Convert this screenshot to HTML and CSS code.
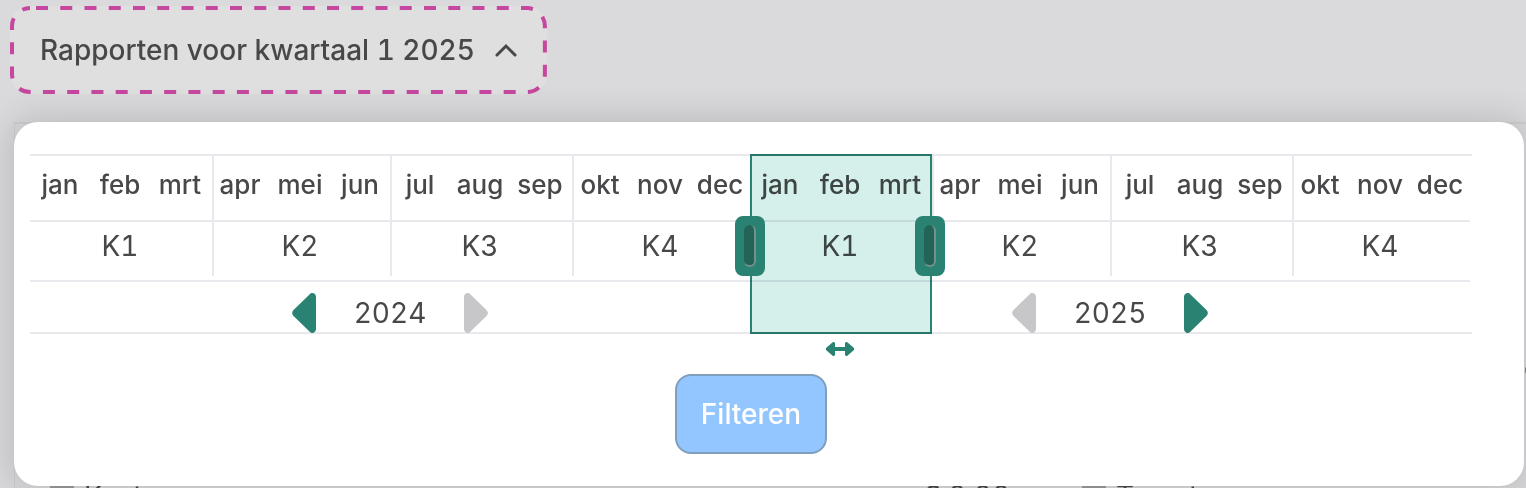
FILE: index.html
```html
<!DOCTYPE html>
<html lang="nl">
  <head>
    <meta charset="UTF-8">
    <meta name="viewport" content="width=device-width, initial-scale=1.0">
    <title>Rapporten</title>
    <link rel="stylesheet" href="styles.css">
  </head>

  <body>
    <button type="button" class="period-toggle" aria-expanded="true">
      <svg class="outline" aria-hidden="true"><rect x="2" y="2" rx="18"/></svg>
      <span>Rapporten voor kwartaal 1 2025</span>
      <svg class="chevron" viewBox="0 0 22 14" aria-hidden="true"><path d="M2 12 L11 3 L20 12"/></svg>
    </button>

    <!-- report under the popup -->
    <div class="report">
      <div class="report-side">e</div>
      <div class="report-row">
        <span class="entry"><i class="mark"></i>Kosten</span>
        <span class="amount">€ 0,00</span>
        <span class="entry"><i class="mark"></i>Te ontvangen</span>
      </div>
    </div>

    <div class="popup">
      <div class="timeline">
        <div class="track">
          <table class="periods">
            <tr class="months">
              <td>jan</td><td>feb</td><td>mrt</td>
              <td class="split">apr</td><td>mei</td><td>jun</td>
              <td class="start">jul</td><td>aug</td><td>sep</td>
              <td class="split">okt</td><td>nov</td><td>dec</td>
              <td>jan</td><td>feb</td><td>mrt</td>
              <td class="split">apr</td><td>mei</td><td>jun</td>
              <td class="start">jul</td><td>aug</td><td>sep</td>
              <td class="split">okt</td><td>nov</td><td>dec</td>
            </tr>
            <tr class="quarters">
              <td colspan="3">K1</td>
              <td colspan="3" class="split">K2</td>
              <td colspan="3" class="start">K3</td>
              <td colspan="3" class="split">K4</td>
              <td colspan="3">K1</td>
              <td colspan="3" class="split">K2</td>
              <td colspan="3" class="start">K3</td>
              <td colspan="3" class="split">K4</td>
            </tr>
            <tr class="years">
              <td colspan="12">
                <div class="year-nav">
                  <button type="button" class="step" aria-label="Vorig startjaar">
                    <svg viewBox="0 0 24 40"><path d="M24 4 V36 C24 39.500 20 41.500 17.500 38.500 L1.500 23 Q-1.200 20 1.500 17 L17.500 1.500 C20 -1.500 24 .5 24 4 Z"/></svg>
                  </button>
                  <span>2024</span>
                  <button type="button" class="step" aria-label="Volgend startjaar" disabled>
                    <svg viewBox="0 0 24 40"><path d="M0 4 V36 C0 39.500 4 41.500 6.500 38.500 L22.500 23 Q25.200 20 22.500 17 L6.500 1.500 C4 -1.500 0 .5 0 4 Z"/></svg>
                  </button>
                </div>
              </td>
              <td colspan="12">
                <div class="year-nav">
                  <button type="button" class="step" aria-label="Vorig eindjaar" disabled>
                    <svg viewBox="0 0 24 40"><path d="M24 4 V36 C24 39.500 20 41.500 17.500 38.500 L1.500 23 Q-1.200 20 1.500 17 L17.500 1.500 C20 -1.500 24 .5 24 4 Z"/></svg>
                  </button>
                  <span>2025</span>
                  <button type="button" class="step" aria-label="Volgend eindjaar">
                    <svg viewBox="0 0 24 40"><path d="M0 4 V36 C0 39.500 4 41.500 6.500 38.500 L22.500 23 Q25.200 20 22.500 17 L6.500 1.500 C4 -1.500 0 .5 0 4 Z"/></svg>
                  </button>
                </div>
              </td>
            </tr>
          </table>

          <!-- selected range, in percent of the two years shown -->
          <div class="selection" style="left: 50%; width: calc(12.5% + 2px)"></div>
          <button type="button" class="handle" style="left: 50%" aria-label="Begin van periode"></button>
          <button type="button" class="handle" style="left: 62.5%" aria-label="Einde van periode"></button>
          <button type="button" class="move" style="left: 56.25%" aria-label="Periode verschuiven">
            <svg viewBox="0 0 28 14"><path d="M8 0 L9 1 V5 H19 V1 L20 0 L21 0 L28 6 V8 L21 14 H20 L19 13 V9 H9 V13 L8 14 H7 L0 8 V6 L7 0 Z"/></svg>
          </button>
        </div>
      </div>

      <button type="submit" class="filter">Filteren</button>
    </div>
  </body>
</html>
```
FILE: styles.css
```css
body {
  margin: 0;
  height: 100vh;
  overflow: hidden;
  position: relative;
  background: #dadadc;
  color: #48484a;
  font-family: Inter, "Liberation Sans", sans-serif;
  font-size: 28px;
  font-variant-numeric: tabular-nums;
}

button {
  border: 0;
  padding: 0;
  background: none;
  color: inherit;
  font: inherit;
  font-variant-numeric: inherit;
  cursor: pointer;
}

.period-toggle {
  position: relative;
  display: flex;
  align-items: center;
  gap: 20px;
  height: 88px;
  margin: 6px 10px 0;
  padding: 0 30px;
  border-radius: 20px;
  background: #dfdfdf;
  font-weight: 500;
}
.outline {
  position: absolute;
  inset: 0;
  width: 100%;
  height: 100%;
}
.outline rect {
  width: calc(100% - 4px);
  height: calc(100% - 4px);
  fill: none;
  stroke: #c6479f;
  stroke-width: 4px;
  stroke-dasharray: 12 12.250;
  stroke-dashoffset: -6px;
}
.chevron {
  width: 22px;
  height: 14px;
  fill: none;
  stroke: #48484a;
  stroke-width: 3px;
  stroke-linecap: round;
}

/* report */
.report {
  margin: 28px 0 0 14px;
  border-top: 2px solid #cfcfd1;
  border-left: 1px solid #cfcfd1;
}
.report-side {
  width: 2px;
  height: 355px;
  margin-left: auto;
  overflow: hidden;
  line-height: 488px;
}
.report-row {
  display: grid;
  grid-template-columns: 872px 160px 1fr;
  padding-left: 35px;
  line-height: 34px;
}
.entry {
  display: flex;
  gap: 10px;
}
.mark {
  width: 24px;
  height: 20px;
  margin-top: 7px;
  background: #9a9a9c;
}

/* popup */
.popup {
  position: absolute;
  top: 122px;
  left: 14px;
  right: 2px;
  display: flex;
  flex-direction: column;
  align-items: center;
  gap: 40px;
  padding: 32px 52px 32px 16px;
  border-radius: 24px;
  background: #fff;
  box-shadow: 0 0 32px 8px rgba(0, 0, 0, .12);
}
.timeline {
  align-self: stretch;
  padding-right: 2px;
  border-top: 2px solid #e8e8ed;
  border-bottom: 2px solid #e8e8ed;
}
.track {
  position: relative;
}

.periods {
  width: 100%;
  table-layout: fixed;
  border-collapse: collapse;
}
.periods td {
  padding: 0;
  text-align: center;
  vertical-align: top;
  background-repeat: no-repeat;
  background-size: 2px 100%;
}
.periods .start,
.periods .split {
  background-image: linear-gradient(#e8e8ed, #e8e8ed);
}
.periods .split {
  background-position: 2px 0;
}
.months td {
  height: 64px;
  font-size: 26px;
  font-weight: 500;
  line-height: 58px;
}
.quarters td {
  height: 58px;
  border-top: 2px solid #e8e8ed;
  line-height: 48px;
}
.quarters .start,
.quarters .split {
  background-size: 2px 54px;
}
.years td {
  border-top: 2px solid #e8e8ed;
}
.year-nav {
  box-sizing: border-box;
  display: flex;
  justify-content: center;
  gap: 38px;
  height: 50px;
  padding-top: 11px;
  line-height: 40px;
}
.step {
  width: 24px;
  height: 40px;
  color: #2a8272;
}
.step:disabled {
  color: #c7c7c9;
}
.step svg,
.move svg {
  display: block;
  width: 100%;
  height: 100%;
  fill: currentColor;
}

.selection {
  position: absolute;
  box-sizing: border-box;
  top: -2px;
  bottom: -2px;
  border: 2px solid #2a8272;
  background: #d5f0ea;
  mix-blend-mode: multiply;
  pointer-events: none;
}
.handle {
  position: absolute;
  top: 60px;
  width: 30px;
  height: 60px;
  margin-left: -15px;
  border-radius: 8px;
  background: #2a8272;
}
.handle::before {
  content: "";
  display: block;
  width: 10px;
  height: 40px;
  margin: 0 auto;
  border-right: 2px solid #71918b;
  border-bottom: 2px solid #71918b;
  border-radius: 6px;
  background: #246357;
}
.move {
  position: absolute;
  top: 186px;
  width: 28px;
  height: 14px;
  margin-left: -14px;
  color: #2a8272;
}

.filter {
  height: 80px;
  padding: 0 24px;
  border: 2px solid #7f9fbd;
  border-radius: 16px;
  background: #93c6ff;
  color: #fff;
  font-weight: 500;
}
```
